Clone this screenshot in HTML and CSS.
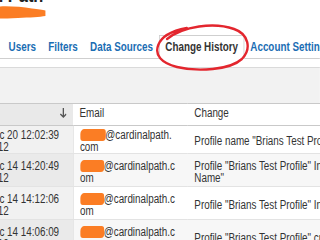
FILE: index.html
```html
<!DOCTYPE html>
<html>
  <head>
    <title>Change History</title>
    <link rel="stylesheet" href="styles.css">
  </head>
  <body>
    <div class="page">
      <div class="masthead">
        <h1 class="profile-title">Cardinal Path</h1>
        <svg class="scribble" viewBox="0 0 46 13" preserveAspectRatio="none">
          <path d="M0 0.5 C10 0 22 1 32 2.5 C38 3.5 43 3.5 45.5 4.5 L45.5 10 C40 11 30 11.5 18 12 C10 12.5 4 12.5 0 12.5 Z" />
        </svg>
      </div>

      <nav class="tabs">
        <a href="#" class="tab">Users</a>
        <a href="#" class="tab">Filters</a>
        <a href="#" class="tab">Data Sources</a>
        <a href="#" class="tab active">Change History</a>
        <a href="#" class="tab">Account Settings</a>
      </nav>

      <!-- red marker circle drawn over the active tab -->
      <svg class="circle" viewBox="0 0 100 50" preserveAspectRatio="none">
        <path d="M14 16 C30 3 62 -1 82 6 C97 11 100 26 90 36 C78 47 45 49 24 44 C8 40 1 32 5 22 C8 14 18 8 34 5" />
      </svg>

      <div class="toolbar"></div>

      <table class="history">
        <colgroup>
          <col class="col-date">
          <col class="col-email">
          <col class="col-change">
        </colgroup>
        <thead>
          <tr>
            <th class="date-cell">
              <svg class="sort" viewBox="0 0 7 10" preserveAspectRatio="none">
                <path d="M3.5 0 V9 M0.5 6 L3.5 9 L6.5 6" />
              </svg>
            </th>
            <th>Email</th>
            <th>Change</th>
          </tr>
        </thead>
        <tbody>
          <tr>
            <td class="date-cell">Dec 20 12:02:39 2012</td>
            <td><span class="redact wide"></span>@cardinalpath.<wbr>com</td>
            <td class="change">Profile name "Brians Test Profile" changed to "Brians Test Profile 2"</td>
          </tr>
          <tr>
            <td class="date-cell">Dec 14 14:20:49 2012</td>
            <td><span class="redact"></span>@cardinalpath.c<wbr>om</td>
            <td class="change">Profile "Brians Test Profile" Include Filter "Request URI Host<br>Name"</td>
          </tr>
          <tr>
            <td class="date-cell">Dec 14 14:12:06 2012</td>
            <td><span class="redact"></span>@cardinalpath.c<wbr>om</td>
            <td class="change">Profile "Brians Test Profile" Include Filter removed</td>
          </tr>
          <tr>
            <td class="date-cell">Dec 14 14:06:09 2012</td>
            <td><span class="redact"></span>@cardinalpath.c<wbr>om</td>
            <td class="change">Profile "Brians Test Profile" created</td>
          </tr>
        </tbody>
      </table>
    </div>
  </body>
</html>
```

FILE: styles.css
```css
* {
  margin: 0;
  padding: 0;
  box-sizing: border-box;
}

body {
  font-family: "Liberation Sans", Arial, sans-serif;
  font-size: 12px;
  color: #333;
  background: #fff;
  width: 320px;
  height: 240px;
  overflow: hidden;
}

/* the screenshot is squeezed sideways, so the whole page is too */
.page {
  position: relative;
  width: 390px;
  transform: scaleX(0.82);
  transform-origin: 0 0;
}

.masthead {
  display: flow-root;
  height: 35px;
}

.profile-title {
  font-size: 20px;
  line-height: 20px;
  font-weight: bold;
  color: #222;
  margin: -15px 0 0 -76px;
  white-space: nowrap;
}

.scribble {
  display: block;
  width: 56px;
  height: 13px;
  margin-top: 1px;
  fill: #fb7d24;
}

.tabs {
  display: flex;
  align-items: flex-end;
  padding-left: 3px;
  border-bottom: 1px solid #cfcfcf;
  margin-bottom: 8px;
  white-space: nowrap;
}

.tab {
  border: 1px solid transparent;
  border-bottom: 0;
  padding: 4px 6.5px;
  line-height: 14px;
  font-weight: bold;
  color: #1a6db3;
  text-decoration: none;
}

.tab.active {
  color: #333;
  background: #fff;
  border-color: #cfcfcf;
  margin-bottom: -1px;
  padding-bottom: 5px;
}

.circle {
  position: absolute;
  left: 187px;
  top: 23px;
  width: 120px;
  height: 50px;
  fill: none;
  stroke: #e3262e;
  stroke-width: 2.4;
  stroke-linecap: round;
}

.toolbar {
  height: 36px;
  background: #f2f2f2;
  border-top: 1px solid #dadada;
}

.history {
  border-collapse: collapse;
  table-layout: fixed;
  width: 741px;
  margin-left: -24px;
}

.col-date {
  width: 113px;
}

.col-email {
  width: 140px;
}

.col-change {
  width: 488px;
}

.history th {
  font-weight: normal;
  text-align: left;
  line-height: 14px;
  padding: 2px 7px 5px 8px;
  border-top: 1px solid #c9c9c9;
  border-bottom: 1px solid #c9c9c9;
  background: #fff;
}

.history th.date-cell {
  text-align: right;
  padding-right: 8px;
  background: #e9e9e9;
}

.sort {
  width: 8.5px;
  height: 10px;
  fill: none;
  stroke: #555;
  stroke-width: 1.3;
  vertical-align: -1px;
}

.history td {
  line-height: 12px;
  padding: 3px 7px 0 8px;
  vertical-align: middle;
  border-bottom: 1px solid #e3e3e3;
}

.history tbody tr {
  height: 33px;
}

.history tbody tr:first-child {
  height: 28px;
}

.history tbody tr:nth-child(even) {
  background: #f7f7f7;
}

.history td.date-cell {
  background: #f1f1f1;
  border-right: 1px solid #e2e2e2;
}

.history tr:nth-child(even) td.date-cell {
  background: #eaeaea;
}

.change {
  white-space: nowrap;
}

.redact {
  display: inline-block;
  width: 29px;
  height: 12px;
  vertical-align: -2px;
  background: #fb7d24;
  border-radius: 5px 3px 4px 3px;
}

.redact.wide {
  width: 31px;
}
```
